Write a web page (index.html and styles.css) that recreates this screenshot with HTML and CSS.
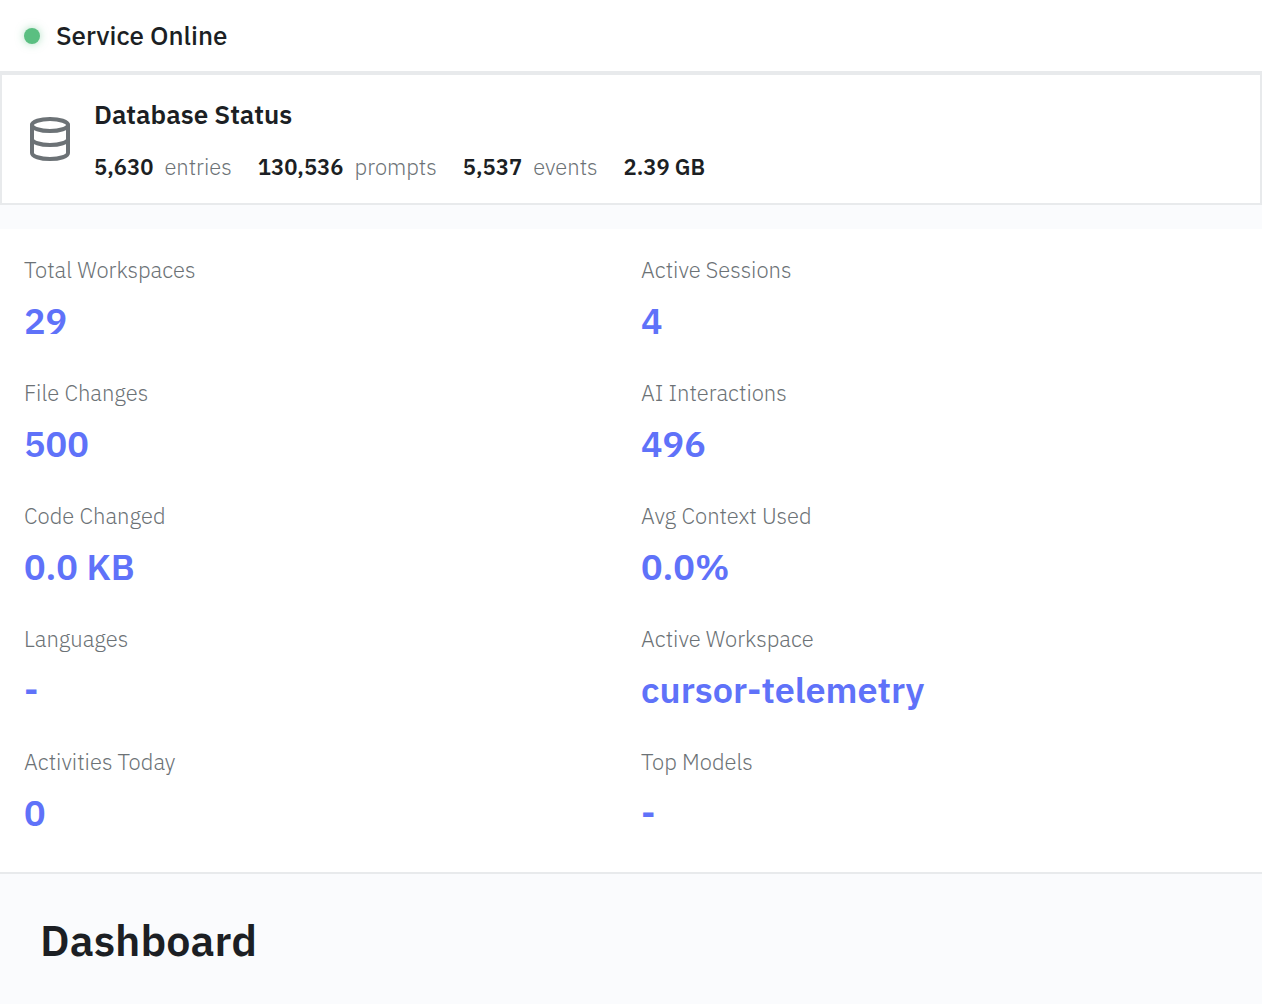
FILE: index.html
```html
<!DOCTYPE html>
<html lang="en">
<head>
  <meta charset="UTF-8">
  <meta name="viewport" content="width=device-width, initial-scale=1.0">
  <title>Dashboard</title>
  <link rel="stylesheet" href="styles.css">
</head>
<body>

  <header class="service-bar">
    <span class="status-dot"></span>
    <span>Service Online</span>
  </header>

  <section class="db-card">
    <svg class="db-icon" viewBox="0 0 24 24" aria-hidden="true">
      <ellipse cx="12" cy="5" rx="9" ry="3"/>
      <path d="M3 5v14a9 3 0 0 0 18 0V5"/>
      <path d="M3 12a9 3 0 0 0 18 0"/>
    </svg>
    <div class="db-info">
      <h2>Database Status</h2>
      <div class="db-stats">
        <span class="db-stat"><strong>5,630</strong> entries</span>
        <span class="db-stat"><strong>130,536</strong> prompts</span>
        <span class="db-stat"><strong>5,537</strong> events</span>
        <span class="db-stat"><strong>2.39 GB</strong></span>
      </div>
    </div>
  </section>

  <dl class="stats-grid">
    <div class="stat">
      <dt>Total Workspaces</dt>
      <dd>29</dd>
    </div>
    <div class="stat">
      <dt>Active Sessions</dt>
      <dd>4</dd>
    </div>
    <div class="stat">
      <dt>File Changes</dt>
      <dd>500</dd>
    </div>
    <div class="stat">
      <dt>AI Interactions</dt>
      <dd>496</dd>
    </div>
    <div class="stat">
      <dt>Code Changed</dt>
      <dd>0.0 KB</dd>
    </div>
    <div class="stat">
      <dt>Avg Context Used</dt>
      <dd>0.0%</dd>
    </div>
    <div class="stat">
      <dt>Languages</dt>
      <dd>-</dd>
    </div>
    <div class="stat">
      <dt>Active Workspace</dt>
      <dd>cursor-telemetry</dd>
    </div>
    <div class="stat">
      <dt>Activities Today</dt>
      <dd>0</dd>
    </div>
    <div class="stat">
      <dt>Top Models</dt>
      <dd>-</dd>
    </div>
  </dl>

  <main class="content">
    <h1>Dashboard</h1>
  </main>

</body>
</html>
```
FILE: styles.css
```css
* {
  box-sizing: border-box;
}

body {
  margin: 0;
  background: #fafbfd;
  color: #1c1f24;
  font-family: "IBM Plex Sans", Inter, sans-serif;
}

h1, h2, dl, dd {
  margin: 0;
}

.service-bar {
  display: flex;
  align-items: center;
  gap: 16px;
  padding: 16px 24px;
  background: #fff;
  border-bottom: 2px solid #e8eaec;
  font-size: 26px;
  font-weight: 500;
  line-height: 39px;
}

.status-dot {
  width: 16px;
  height: 16px;
  border-radius: 50%;
  background: #5abf81;
  box-shadow: 0 0 8px rgba(90, 191, 129, 0.5);
}

.db-card {
  display: flex;
  align-items: center;
  gap: 20px;
  margin-bottom: 24px;
  padding: 24px;
  background: #fff;
  border: 2px solid #e8eaec;
}

.db-icon {
  width: 48px;
  height: 48px;
  flex-shrink: 0;
  fill: none;
  stroke: #6c7276;
  stroke-width: 2;
  stroke-linecap: round;
  stroke-linejoin: round;
}

.db-info h2 {
  margin-bottom: 26px;
  font-size: 26px;
  font-weight: 600;
  line-height: 30px;
}

.db-stats {
  display: flex;
  flex-wrap: wrap;
  gap: 26px;
  color: #6c7276;
  font-size: 22px;
  font-weight: 300;
  line-height: 24px;
}

.db-stat {
  display: flex;
  gap: 11px;
}

.db-stat strong {
  color: #1c1f24;
  font-weight: 600;
}

.stats-grid {
  display: grid;
  grid-template-columns: 1fr 1fr;
  gap: 20px;
  padding: 24px;
  background: #fff;
  border-bottom: 2px solid #e8eaec;
}

.stat {
  padding-bottom: 2px;
}

.stat dt {
  margin-bottom: 2px;
  color: #6c7276;
  font-size: 22px;
  font-weight: 300;
  line-height: 33px;
}

.stat dd {
  color: #5f72f9;
  font-size: 36px;
  font-weight: 600;
  line-height: 66px;
}

.content {
  padding: 32px 40px;
}

.content h1 {
  font-size: 43px;
  font-weight: 600;
  line-height: 68px;
}
```
